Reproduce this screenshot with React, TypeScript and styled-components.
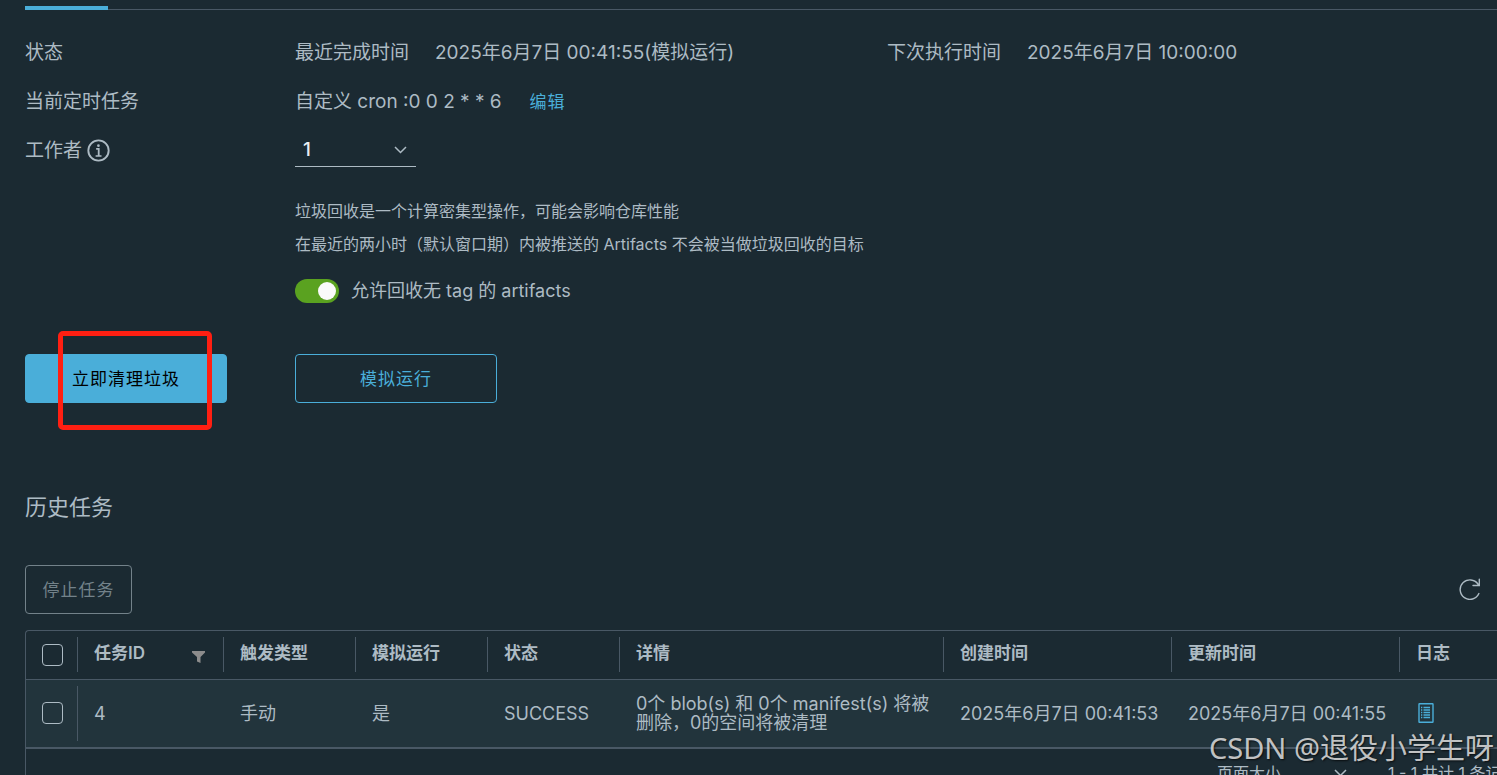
import React from "react";
import styled, { createGlobalStyle, css } from "styled-components";

const c = {
  bg: "#1b2a32",
  row: "#22343c",
  text: "#adbbc4",
  line: "#495865",
  blue: "#4aaed9",
  green: "#5aa220",
};

const GlobalStyle = createGlobalStyle`
  *, *::before, *::after { box-sizing: border-box; }
  body {
    margin: 0;
    background: ${c.bg};
    color: ${c.text};
    font-family: Inter, "Noto Sans CJK SC", sans-serif;
    font-size: 19px;
    line-height: 24px;
    overflow: hidden;
  }
  button, select, input { font: inherit; color: inherit; margin: 0; }
`;

const Page = styled.main`
  position: relative;
  height: 100vh;
  padding-left: 25px;
  overflow: hidden;
`;

const TabBar = styled.nav`
  display: flex;
  align-items: flex-end;
  height: 10px;
  box-shadow: inset 0 -1px 0 ${c.line};
`;

const ActiveTab = styled.span`
  width: 83px;
  height: 4px;
  background: ${c.blue};
`;

const Settings = styled.section`
  display: grid;
  grid-template-columns: 270px 1fr;
  grid-auto-rows: 49px;
  align-items: center;
  padding-top: 18px;
`;

const Label = styled.div`
  display: flex;
  align-items: center;
  gap: 4px;
`;

const Schedule = styled.div`
  display: grid;
  grid-template-columns: 140px 452px 140px 1fr;
  white-space: nowrap;
`;

const CronLine = styled.div`
  display: flex;
  align-items: center;
  gap: 28px;
`;

const LinkButton = styled.button`
  padding: 0;
  border: 0;
  background: none;
  color: ${c.blue};
  font-size: 17px;
  letter-spacing: 1px;
`;

const SelectBox = styled.span<{ $underline?: boolean; $width: number }>`
  position: relative;
  display: inline-flex;
  align-items: center;
  width: ${(p) => p.$width}px;
  height: 32px;
  border-bottom: ${(p) => (p.$underline ? `1px solid ${c.text}` : "0")};

  select {
    width: 100%;
    height: 100%;
    padding: 0 8px;
    border: 0;
    appearance: none;
    background: transparent;
    color: #e9edf0;
    font-weight: 500;
  }

  svg {
    position: absolute;
    right: 9px;
    pointer-events: none;
  }
`;

const Notes = styled.div`
  margin: 20px 0 0 270px;
  font-size: 16px;
  line-height: 33px;

  p { margin: 0; }
`;

const ToggleRow = styled.label`
  display: flex;
  align-items: center;
  gap: 12px;
  margin: 18px 0 0 270px;
  font-size: 18px;
`;

const Toggle = styled.input`
  appearance: none;
  display: flex;
  justify-content: flex-end;
  align-items: center;
  width: 44px;
  height: 24px;
  padding: 0 3px;
  border-radius: 12px;
  background: ${c.green};

  &::before {
    content: "";
    width: 18px;
    height: 18px;
    border-radius: 50%;
    background: #fafafa;
  }
`;

const Actions = styled.div`
  display: flex;
  gap: 68px;
  margin-top: 51px;
`;

const Marked = styled.div`
  position: relative;
`;

const RedFrame = styled.div`
  position: absolute;
  inset: -23px 15px -27px 33px;
  border: 5px solid #ff1f12;
  border-radius: 5px;
  pointer-events: none;
`;

const Button = styled.button<{ $kind: "solid" | "outline" | "disabled" }>`
  height: 49px;
  padding: 0;
  border: 1px solid ${c.blue};
  border-radius: 4px;
  background: transparent;
  color: ${c.blue};
  font-size: 17px;
  letter-spacing: 1px;
  min-width: 202px;
  ${(p) => p.$kind === "solid" && css`
    background: ${c.blue};
    color: #000;
  `}
  ${(p) => p.$kind === "disabled" && css`
    min-width: 107px;
    border-color: #73828a;
    color: #73828a;
  `}
`;

const Heading = styled.h2`
  margin: 88px 0 0;
  font-size: 22px;
  line-height: 32px;
  font-weight: 400;
`;

const Toolbar = styled.div`
  display: flex;
  justify-content: space-between;
  align-items: center;
  margin: 42px 16px 16px 0;
`;

const IconButton = styled.button`
  display: flex;
  padding: 0;
  border: 0;
  background: none;
`;

const Grid = styled.div`
  border: 1px solid ${c.line};
  border-right: 0;
  border-radius: 4px 0 0 0;
`;

const Table = styled.table`
  width: 100%;
  table-layout: fixed;
  border-collapse: collapse;
  font-size: 18px;
  line-height: 19px;

  th, td { padding: 0; text-align: left; }
  th { height: 48px; font-size: 17px; font-weight: 600; }
  td { height: 69px; }
  thead tr { border-bottom: 1px solid ${c.line}; }
  tbody tr { background: ${c.row}; border-bottom: 2px solid ${c.line}; }
`;

const HeadCell = styled.div`
  display: flex;
  justify-content: space-between;
  height: 35px;
  padding: 0 18px 0 16px;
  line-height: 33px;
  border-left: 1px solid ${c.line};

  svg { margin-top: 14px; }
`;

const BodyCell = styled.div<{ $divided?: boolean; $nowrap?: boolean }>`
  display: flex;
  align-items: center;
  height: 55px;
  padding: 0 12px 0 17px;
  border-left: ${(p) => (p.$divided ? `1px solid ${c.line}` : "0")};
  white-space: ${(p) => (p.$nowrap ? "nowrap" : "normal")};
  ${(p) => p.$divided && css`padding-left: 16px;`}
`;

const CheckCell = styled.div`
  display: flex;
  align-items: center;
  height: 36px;
  padding-left: 16px;
`;

const Check = styled.input`
  appearance: none;
  display: block;
  width: 21px;
  height: 22px;
  border: 1px solid ${c.text};
  border-radius: 4px;
`;

const LogLink = styled.a`
  display: flex;
  color: ${c.blue};
  padding-left: 2px;
`;

const Footer = styled.footer`
  display: flex;
  justify-content: flex-end;
  align-items: center;
  height: 48px;
  font-size: 16px;
  white-space: nowrap;
`;

const PageSize = styled.label`
  display: flex;
  align-items: center;
  gap: 13px;
`;

const Range = styled.span`
  width: 109px;
  margin-left: 32px;
`;

const Watermark = styled.div`
  position: absolute;
  right: 3px;
  bottom: 7px;
  font: 29px/40px "Noto Sans", "Noto Sans CJK SC", sans-serif;
  color: rgba(225, 225, 225, 0.85);
  text-shadow: 1px 1px 2px rgba(0, 0, 0, 0.7);
  pointer-events: none;
`;

const InfoIcon = () => (
  <svg width="25" height="25" viewBox="0 0 36 36" fill="currentColor" aria-hidden="true">
    <circle cx="17.9" cy="11" r="1.9" />
    <path d="M21.500 24.700H19.600V14.500H15.500a1.200 1.200 0 0 0 0 2.400H17v7.800h-2.300a1.200 1.200 0 0 0 0 2.400h6.800a1.200 1.200 0 0 0 0-2.400Z" />
    <path d="M18 34A16 16 0 1 1 34 18 16 16 0 0 1 18 34ZM18 4.700A13.300 13.300 0 1 0 31.300 18 13.300 13.300 0 0 0 18 4.700Z" />
  </svg>
);

const Chevron = () => (
  <svg width="13" height="8" viewBox="0 0 13 8" fill="none" stroke={c.text} strokeWidth="1.5" aria-hidden="true">
    <path d="M1 1l5.5 5.5L12 1" />
  </svg>
);

const FilterIcon = () => (
  <svg width="13" height="12" viewBox="0 0 13 12" fill="#8c8c8c" aria-hidden="true">
    <path d="M0 0h13v1.500L8.500 6v6L5 10.500V6L0 1.500Z" />
  </svg>
);

const RefreshIcon = () => (
  <svg width="23" height="23" viewBox="0 0 36 36" fill="currentColor" aria-hidden="true">
    <path d="M22.4,11.65a1.09,1.09,0,0,0,1.09,1.09H34.43V1.81a1.09,1.09,0,1,0-2.19,0V8.95a16.41,16.41,0,1,0,1.47,15.86,1.12,1.12,0,0,0-2.05-.9,14.18,14.18,0,1,1-1.05-13.36H23.5A1.09,1.09,0,0,0,22.4,11.65Z" />
  </svg>
);

const LogIcon = () => (
  <svg width="16" height="20" viewBox="0 0 16 20" fill="none" stroke="currentColor" aria-hidden="true">
    <rect x="1" y="0.7" width="14" height="18.6" rx="0.5" strokeWidth="1.4" />
    <path d="M3 4.500h1.300M3 7h1.300M3 9.500h1.300M3 12h1.300M3 14.500h1.300M5.500 4.500H12M5.500 7H12M5.500 9.500H12M5.500 12H12M5.500 14.500H12" strokeWidth="1.400" />
  </svg>
);

const widths = [51, 146, 132, 132, 132, 324, 228, 228];
const headings = ["触发类型", "模拟运行", "状态", "详情", "创建时间", "更新时间", "日志"];
const job = {
  type: "手动",
  dryRun: "是",
  status: "SUCCESS",
  detail: "0个 blob(s) 和 0个 manifest(s) 将被删除，0的空间将被清理",
  created: "2025年6月7日 00:41:53",
  updated: "2025年6月7日 00:41:55",
};

export default function App() {
  return (
    <>
      <GlobalStyle />
      <Page>
        <TabBar><ActiveTab /></TabBar>

        <Settings>
          <Label>状态</Label>
          <Schedule>
            <span>最近完成时间</span>
            <span>2025年6月7日 00:41:55(模拟运行)</span>
            <span>下次执行时间</span>
            <span>2025年6月7日 10:00:00</span>
          </Schedule>
          <Label>当前定时任务</Label>
          <CronLine>
            <span>自定义 cron :0 0 2 * * 6</span>
            <LinkButton type="button">编辑</LinkButton>
          </CronLine>
          <Label>
            <label htmlFor="workers">工作者</label>
            <InfoIcon />
          </Label>
          <SelectBox $underline $width={121}>
            <select id="workers" defaultValue="1"><option>1</option></select>
            <Chevron />
          </SelectBox>
        </Settings>

        <Notes>
          <p>垃圾回收是一个计算密集型操作，可能会影响仓库性能</p>
          <p>在最近的两小时（默认窗口期）内被推送的 Artifacts 不会被当做垃圾回收的目标</p>
        </Notes>
        <ToggleRow>
          <Toggle type="checkbox" role="switch" defaultChecked />
          允许回收无 tag 的 artifacts
        </ToggleRow>

        <Actions>
          <Marked>
            <Button type="button" $kind="solid">立即清理垃圾</Button>
            <RedFrame />
          </Marked>
          <Button type="button" $kind="outline">模拟运行</Button>
        </Actions>

        <Heading>历史任务</Heading>
        <Toolbar>
          <Button type="button" $kind="disabled" disabled>停止任务</Button>
          <IconButton type="button" aria-label="刷新"><RefreshIcon /></IconButton>
        </Toolbar>

        <Grid>
          <Table>
            <colgroup>
              {widths.map((w, i) => <col key={i} width={w} />)}
              <col />
            </colgroup>
            <thead>
              <tr>
                <th><CheckCell><Check type="checkbox" aria-label="全选" /></CheckCell></th>
                <th><HeadCell>任务ID<FilterIcon /></HeadCell></th>
                {headings.map((h) => <th key={h}><HeadCell>{h}</HeadCell></th>)}
              </tr>
            </thead>
            <tbody>
              <tr>
                <td><CheckCell><Check type="checkbox" aria-label="选择任务 4" /></CheckCell></td>
                <td><BodyCell $divided>4</BodyCell></td>
                <td><BodyCell>{job.type}</BodyCell></td>
                <td><BodyCell>{job.dryRun}</BodyCell></td>
                <td><BodyCell>{job.status}</BodyCell></td>
                <td><BodyCell>{job.detail}</BodyCell></td>
                <td><BodyCell $nowrap>{job.created}</BodyCell></td>
                <td><BodyCell $nowrap>{job.updated}</BodyCell></td>
                <td><BodyCell><LogLink href="#log" aria-label="日志"><LogIcon /></LogLink></BodyCell></td>
              </tr>
            </tbody>
          </Table>
          <Footer>
            <PageSize>
              页面大小
              <SelectBox $width={62}>
                <select aria-label="页面大小"><option></option></select>
                <Chevron />
              </SelectBox>
            </PageSize>
            <Range>1 - 1 共计 1 条记录</Range>
          </Footer>
        </Grid>

        <Watermark>CSDN @退役小学生呀</Watermark>
      </Page>
    </>
  );
}
